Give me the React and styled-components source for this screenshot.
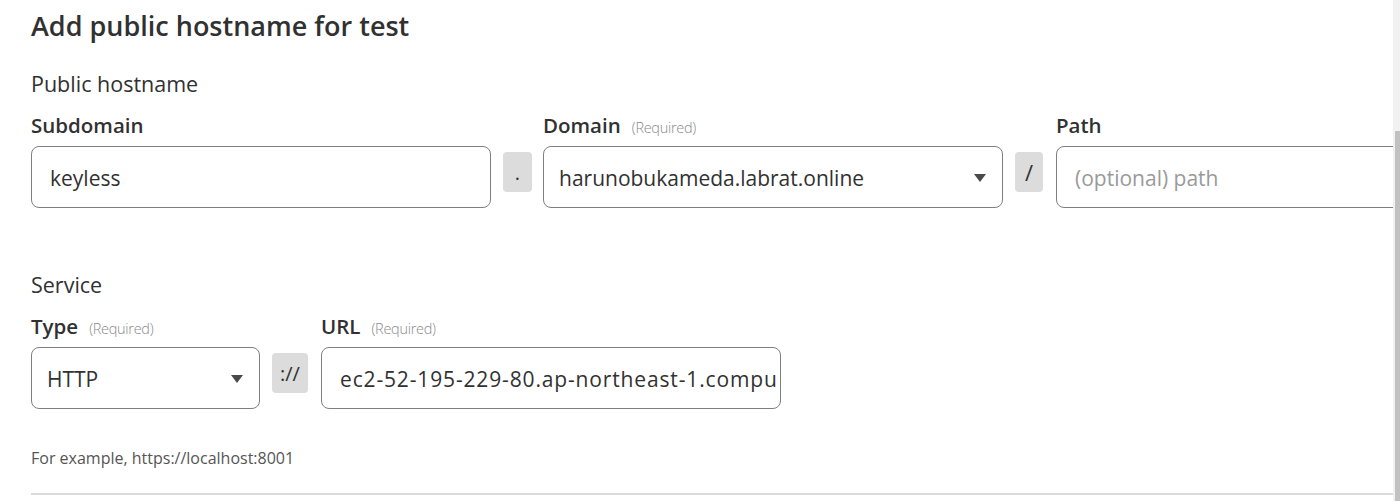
import React from 'react'
import styled, { createGlobalStyle } from 'styled-components'

const GlobalStyle = createGlobalStyle`
  body {
    margin: 0;
    background: #fff;
    font-family: "Open Sans", "Noto Sans", sans-serif;
    color: #313131;
  }
`

const Page = styled.div`
  display: flex;
  height: 501px;
  overflow: hidden;
`

const Main = styled.main`
  flex: 1;
  min-width: 0;
  overflow: hidden;
  padding: 8px 0 0 31px;
`

const Title = styled.h2`
  margin: 0;
  font-size: 27px;
  font-weight: 600;
  line-height: 36px;
  white-space: nowrap;
`

const SectionTitle = styled.div`
  margin-top: ${p => p.$top}px;
  font-size: 21.5px;
  line-height: 28px;
`

const FieldRow = styled.div`
  display: flex;
  align-items: flex-end;
  margin-top: 13px;
`

const Field = styled.div`
  display: flex;
  flex-direction: column;
  flex: 0 0 ${p => p.$width}px;
  width: ${p => p.$width}px;
  min-width: 0;
`

const LabelRow = styled.div`
  display: flex;
  align-items: baseline;
  gap: 11px;
  height: 28px;
  margin-bottom: 7px;
  white-space: nowrap;
`

const Label = styled.span`
  font-size: 20.5px;
  font-weight: 600;
  line-height: 28px;
`

const Hint = styled.span`
  font-size: 14.5px;
  font-weight: 300;
  color: #8a8a8a;
  letter-spacing: -0.3px;
`

const Box = styled.div`
  box-sizing: border-box;
  height: 62px;
  border: 1px solid #7f7f7f;
  border-radius: 8px;
  display: flex;
  align-items: center;
  padding: 1px ${p => p.$padRight || 18}px 0 ${p => p.$padLeft || 18}px;
  font-size: 21px;
  color: ${p => (p.$placeholder ? '#9a9a9a' : '#313131')};
  overflow: hidden;
  white-space: nowrap;
`

const BoxText = styled.span`
  flex: 1;
  min-width: 0;
  overflow: hidden;
  letter-spacing: ${p => p.$spacing || 0}px;
`

const Caret = styled.svg`
  flex: 0 0 auto;
  width: 12px;
  height: 8px;
  margin-left: 8px;
  fill: #4a4a4a;
`

const Sep = styled.div`
  flex: 0 0 ${p => p.$width}px;
  height: 40px;
  margin: 0 ${p => p.$right}px 16px ${p => p.$left}px;
  background: #dcdcdc;
  border-radius: 4px;
  display: flex;
  align-items: center;
  justify-content: center;
  font-size: ${p => p.$size || 20}px;
  color: #313131;
`

const Example = styled.div`
  margin-top: 39px;
  font-size: 16px;
  line-height: 20px;
  color: #555;
`

const Divider = styled.hr`
  margin: 25px 0 0;
  border: none;
  border-top: 2px solid #dadada;
`

const Scrollbar = styled.div`
  flex: 0 0 7px;
  display: flex;
  flex-direction: column;
  background: #f1f1f1;
`

const Thumb = styled.div`
  margin: 131px 0 0 2px;
  flex: 1;
  background: #c1c1c1;
`

const DownCaret = () => (
  <Caret viewBox="0 0 12 8">
    <path d="M0 0h12L6 8z" />
  </Caret>
)

export default function App() {
  return (
    <Page>
      <GlobalStyle />
      <Main>
        <Title>Add public hostname for test</Title>

        <SectionTitle $top={26}>Public hostname</SectionTitle>
        <FieldRow>
          <Field $width={460}>
            <LabelRow>
              <Label>Subdomain</Label>
            </LabelRow>
            <Box>
              <BoxText>keyless</BoxText>
            </Box>
          </Field>
          <Sep $width={29} $left={12} $right={11}>.</Sep>
          <Field $width={460}>
            <LabelRow>
              <Label>Domain</Label>
              <Hint>(Required)</Hint>
            </LabelRow>
            <Box $padLeft={15} $padRight={16}>
              <BoxText>harunobukameda.labrat.online</BoxText>
              <DownCaret />
            </Box>
          </Field>
          <Sep $width={28} $left={12} $right={13} $size={22}>/</Sep>
          <Field $width={460}>
            <LabelRow>
              <Label>Path</Label>
            </LabelRow>
            <Box $placeholder>
              <BoxText>(optional) path</BoxText>
            </Box>
          </Field>
        </FieldRow>

        <SectionTitle $top={63}>Service</SectionTitle>
        <FieldRow>
          <Field $width={229}>
            <LabelRow>
              <Label>Type</Label>
              <Hint>(Required)</Hint>
            </LabelRow>
            <Box $padLeft={15} $padRight={16}>
              <BoxText>HTTP</BoxText>
              <DownCaret />
            </Box>
          </Field>
          <Sep $width={36} $left={12} $right={13}>://</Sep>
          <Field $width={460}>
            <LabelRow>
              <Label>URL</Label>
              <Hint>(Required)</Hint>
            </LabelRow>
            <Box $padRight={4}>
              <BoxText $spacing={0.85}>ec2-52-195-229-80.ap-northeast-1.compute.amazonaws.com</BoxText>
            </Box>
          </Field>
        </FieldRow>

        <Example>For example, https://localhost:8001</Example>
        <Divider />
      </Main>
      <Scrollbar>
        <Thumb />
      </Scrollbar>
    </Page>
  )
}
